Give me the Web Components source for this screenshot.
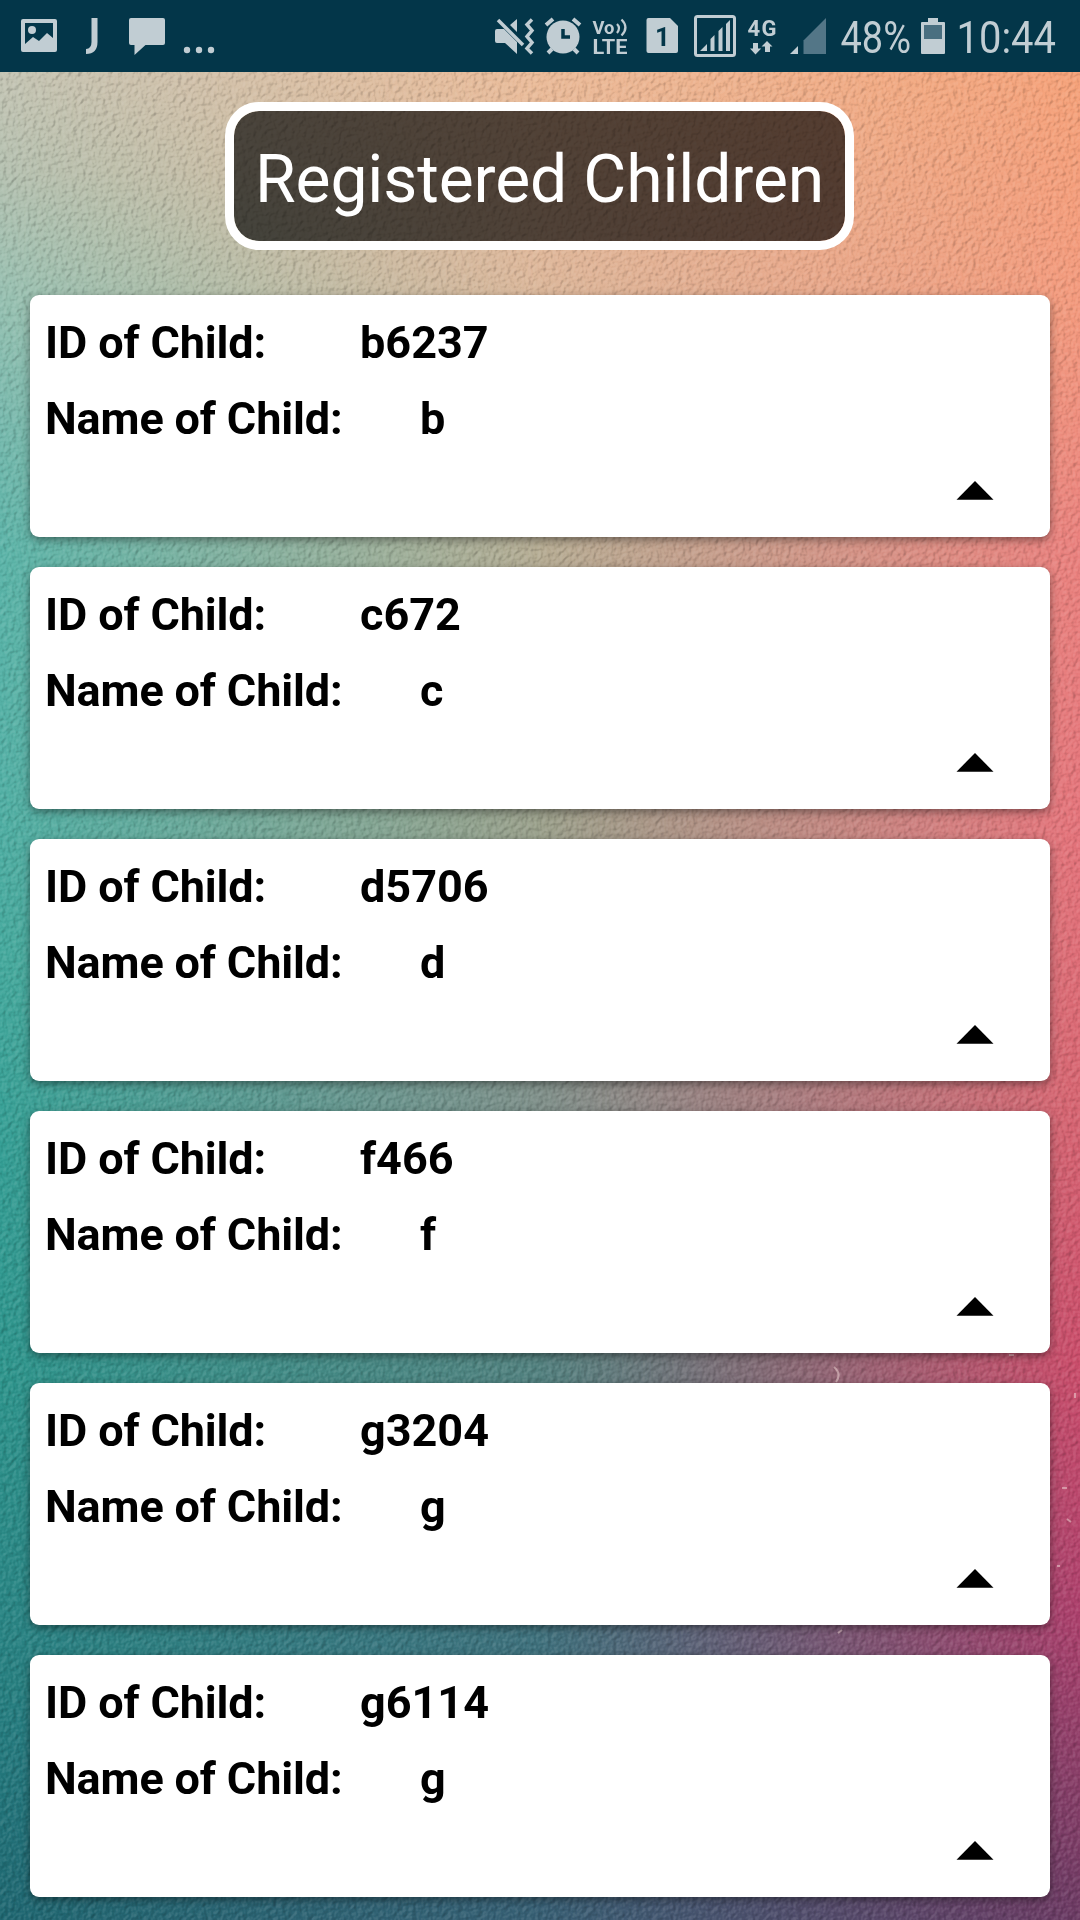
<!DOCTYPE html>
<html lang="en">
<head>
<meta charset="utf-8">
<title>Registered Children</title>
<style>
html,body{margin:0;padding:0}
body{width:1080px;height:1920px;overflow:hidden;font-family:Roboto,sans-serif}
</style>
</head>
<body>
<child-app></child-app>
<script>
class WallPaper extends HTMLElement{
  constructor(){
    super();
    this.attachShadow({mode:'open'}).innerHTML=`
<style>
:host{display:block;position:absolute;inset:0;overflow:hidden}
div,svg{position:absolute;inset:0;width:100%;height:100%}
.l{background:linear-gradient(#c6c5b4 3%,#b4c1b0 9%,#94c0b1 16%,#76b9ad 22%,#5ab4a8 29%,#52b0a5 40%,#44a99d 50%,#349e94 60%,#2d948c 72%,#298685 84%,#23767b 93%,#1f6771)}
.m{background:linear-gradient(#ecbb98 3%,#deb79a 14%,#b6ac93 28.500%,#9ba08b 43%,#80908a 57%,#53827f 71%,#3f717c 85%,#375e73);-webkit-mask:linear-gradient(90deg,transparent,#000 50%)}
.r{background:linear-gradient(#f5a278 3%,#f3997c 16%,#ea807c 28.500%,#e5737a 43%,#d86571 57%,#cb4c6a 71%,#ad406c 84%,#6b3a63);-webkit-mask:linear-gradient(90deg,transparent 50%,#000)}
.grain{mix-blend-mode:hard-light;opacity:.24}
.scratch{opacity:.55}
</style>
<div class="l"></div><div class="m"></div><div class="r"></div>
<svg class="grain"><filter id="g" x="0" y="0" width="100%" height="100%" color-interpolation-filters="sRGB"><feTurbulence type="fractalNoise" baseFrequency=".2" numOctaves="2" seed="8"/><feDiffuseLighting surfaceScale="1.900" diffuseConstant=".74" lighting-color="#fff"><feDistantLight azimuth="215" elevation="45"/></feDiffuseLighting></filter><rect width="100%" height="100%" filter="url(#g)"/></svg>
<svg class="scratch" fill="none" stroke="#ecd0d0" stroke-width="2"><path d="M834 1367q8 7 2 15M1075 1393v5M1062 1488h5M1067 1519l4 3M1057 1566h3M838 1633l4-3M1009 1355h5"/></svg>`;
  }
}
class StatusBar extends HTMLElement{
  constructor(){
    super();
    this.attachShadow({mode:'open'}).innerHTML=`
<style>
:host{display:block;position:relative;height:72px;background:#033649}
svg{display:block}
text{font-family:Roboto,sans-serif}
</style>
<svg width="1080" height="72" fill="#c1cdd3">
<path fill-rule="evenodd" d="M23 19h32q2 0 2 2v29q0 2-2 2H23q-2 0-2-2V21q0-2 2-2zM25 23v21l8-7 6 4 8-8 6 5V23z"/><circle cx="32" cy="30" r="4"/>
<path d="M91.500 18h6v24q0 12-11.500 12v-5q5.500-.5 5.500-7z"/>
<path d="M131 18h32q2 0 2 2v23q0 2-2 2h-17.500L134.500 55V45H131q-2 0-2-2V20q0-2 2-2z"/>
<circle cx="187" cy="50" r="3.200"/><circle cx="199" cy="50" r="3.200"/><circle cx="211" cy="50" r="3.200"/>
<path d="M497 29h7l13 13v12L505 43h-8q-2 0-2-2V31q0-2 2-2zM517 19v13l-7-7z"/>
<path d="M498 20l25 25" stroke="#c1cdd3" stroke-width="3.500"/>
<path d="M532 19l-5 5 5 6-5 6 5 6-5 6 5 5" transform="translate(0 .5)" fill="none" stroke="#c1cdd3" stroke-width="3.500"/>
<circle cx="563" cy="37" r="16.500"/><path d="M546 25l7-6M573 19l7 6M552 49l-4 4M574 49l4 4" stroke="#c1cdd3" stroke-width="4"/><path d="M563 29v8h7" fill="none" stroke="#033649" stroke-width="3.500"/>
<text x="592.500" y="33.500" font-size="18" font-weight="700" textLength="22" lengthAdjust="spacingAndGlyphs">Vo</text>
<path d="M617 24q4 4 0 9M621.500 19.500q8 8 0 16" fill="none" stroke="#c1cdd3" stroke-width="2.200"/>
<text x="592.500" y="53.500" font-size="20" font-weight="700" textLength="35" lengthAdjust="spacingAndGlyphs">LTE</text>
<path d="M648.500 18H670l8 8v25q0 2-2 2h-27.500q-2 0-2-2V20q0-2 2-2z"/><text x="655" y="46" font-size="26" font-weight="700" fill="#033649">1</text>
<rect x="695.500" y="16.500" width="39" height="39" rx="2" fill="none" stroke="#c1cdd3" stroke-width="3"/>
<path d="M700 51l7-7v7zM710.500 39l4-4v16h-4zM718.500 31l4-4v24h-4zM726 24l4-4v31h-4z"/>
<text x="747.500" y="36" font-size="22" font-weight="700" textLength="29">4G</text>
<path d="M753 43h5v5.500h3.200L755.500 54.500 750 48.500h3zM765 52v-5.500h-3.500L767 41l5.500 5.500H770V52z"/>
<path d="M790 54l8-8v8z"/><path d="M803.500 40.500L826 18v36h-22.500z" fill="#537687"/>
<text x="840.500" y="53" font-size="45" textLength="70.500" lengthAdjust="spacingAndGlyphs">48%</text>
<path d="M928 18h10v4h6q1 0 1 1v30q0 1-1 1h-22q-1 0-1-1V23q0-1 1-1h6z"/><path d="M924 25h18v14h-18z" fill="#4a6f80"/>
<text x="956.500" y="53" font-size="45" textLength="99.500" lengthAdjust="spacingAndGlyphs">10:44</text>
</svg>`;
  }
}
class PageTitle extends HTMLElement{
  constructor(){
    super();
    this.attachShadow({mode:'open'}).innerHTML=`
<style>
:host{display:block;position:relative;box-sizing:border-box;width:629px;height:148px;margin:30px auto 45px 225px;border:9px solid #fff;border-radius:34px;background:rgba(0,0,0,.65);background-clip:padding-box;color:#fff;font-size:66px;letter-spacing:-.13px;line-height:78px;padding:30px 0 0 21px;white-space:nowrap}
</style><slot></slot>`;
  }
}
class ChildCard extends HTMLElement{
  constructor(){
    super();
    this.attachShadow({mode:'open'}).innerHTML=`
<style>
:host{display:block;position:relative;box-sizing:border-box;height:242px;margin:0 30px 30px;padding:21px 56px 0 15px;background:#fff;border-radius:9px;box-shadow:0 3px 8px rgba(0,0,0,.42);font-size:45px;font-weight:700;line-height:53px;color:#000}
.row{display:flex;margin-bottom:23px;white-space:nowrap}
.row span:first-child{width:315px;letter-spacing:-.14px}
.row.n span:first-child{width:375px}
svg{display:block;margin:36px 0 0 auto}
</style>
<div class="row"><span>ID of Child:</span><span><slot name="id"></slot></span></div>
<div class="row n"><span>Name of Child:</span><span><slot name="name"></slot></span></div>
<svg width="38" height="19"><path d="M.5 18.700L19 0l18.500 18.700z"/></svg>`;
  }
}
class ChildApp extends HTMLElement{
  constructor(){
    super();
    const list=[['b6237','b'],['c672','c'],['d5706','d'],['f466','f'],['g3204','g'],['g6114','g']];
    this.attachShadow({mode:'open'}).innerHTML=`
<style>:host{display:block;position:relative;width:1080px;height:1920px;overflow:hidden}main{display:flow-root}</style>
<wall-paper></wall-paper><status-bar></status-bar>
<main><page-title>Registered Children</page-title>${list.map(([i,n])=>`<child-card><span slot="id">${i}</span><span slot="name">${n}</span></child-card>`).join('')}</main>`;
  }
}
customElements.define('wall-paper',WallPaper);
customElements.define('status-bar',StatusBar);
customElements.define('page-title',PageTitle);
customElements.define('child-card',ChildCard);
customElements.define('child-app',ChildApp);
</script>
</body>
</html>
